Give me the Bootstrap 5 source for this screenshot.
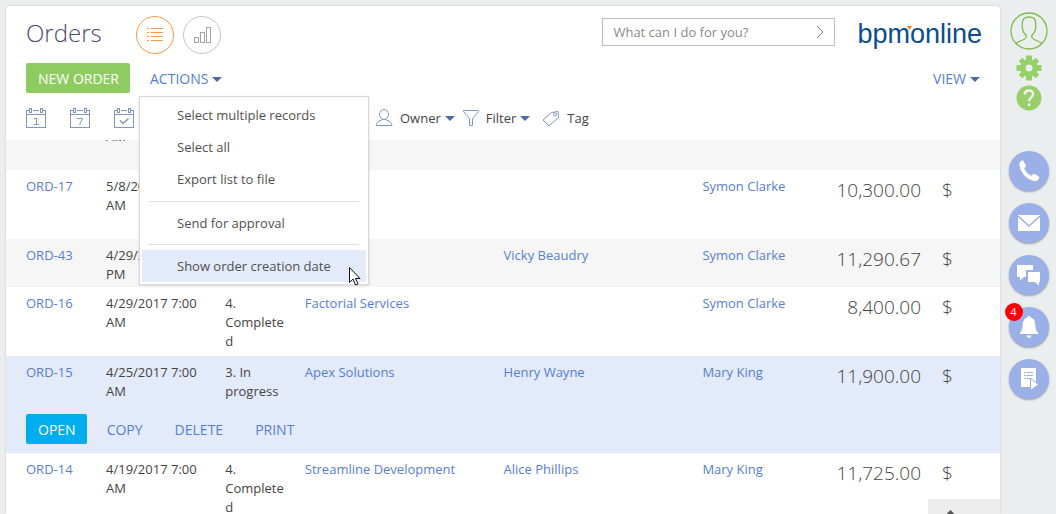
<!DOCTYPE html>
<html lang="en">
<head>
<meta charset="utf-8">
<meta name="viewport" content="width=device-width, initial-scale=1">
<title>Orders</title>
<link href="https://cdn.jsdelivr.net/npm/bootstrap@5.3.0/dist/css/bootstrap.min.css" rel="stylesheet">
<style>
:root { --link: #567ed6; --ink: #444; }
body { background: #eaeeee; color: var(--ink); font: 13px/19px "Open Sans", sans-serif; }
a { color: var(--link); text-decoration: none; }
svg { display: block; flex: none; }
.workspace { background: #fff; border-radius: 3px 3px 0 0; margin: 6px 0 0 6px; box-shadow: 0 0 2px rgba(0,0,0,.2); min-width: 0; }
.page-head { height: 57px; padding: 0 18px 0 20px; }
.page-title { font-size: 24px; line-height: 34px; font-weight: 300; color: #50476f; width: 110px; margin: 0 0 4px; }
.views { gap: 9px; }
.view-btn { width: 38px; height: 38px; border-radius: 50%; border: 1px solid #c6c6c6; background: none; color: #a3a3a3; padding: 0; display: grid; place-items: center; }
.view-btn.active { border-color: #f59a4b; color: #f59a4b; }
.command { width: 233px; height: 28px; border: 1px solid #bdbdbd; margin: 0 22px 5px 0; }
.command input { border: 0; outline: 0; width: 100%; padding: 0 10px; color: var(--ink); background: none; }
.command input::placeholder { color: #8a8a8a; opacity: 1; }
.command button { border: 0; background: none; padding: 0 9px; color: #777; }
.brand { font: 27px/31px "Liberation Sans", sans-serif; color: #0c4c8f; margin-bottom: 1px; }
.brand-mark { position: absolute; left: 50px; top: 7px; }
.bar { padding: 0 20px; height: 30px; font-size: 14px; }
.cmd { font-size: 14px; line-height: 20px; height: 30px; border: 0; border-radius: 2px; padding: 2px 11px 0 12px; color: #fff; }
.cmd-new { background: #8ecb60; }
.cmd-open { background: #00aeef; }
.cmd-link { background: none; color: var(--link); padding: 2px 0 0; }
.tri { border: 5px solid transparent; border-top-color: #4a6ba5; border-bottom: 0; }
.menu { --bs-dropdown-min-width: 228px; --bs-dropdown-border-radius: 0; --bs-dropdown-font-size: 13px; padding: 2px; border-color: #d8d8d8; left: -7px; top: 33px; box-shadow: 0 1px 3px rgba(0,0,0,.12); }
.menu .dropdown-item { height: 32px; line-height: 32px; padding: 0 35px; color: #505050; }
.menu .dropdown-item.current { background: #e3eafa; }
.menu .dropdown-divider { margin: 6px 7px 5px; border-color: #e0e0e0; opacity: 1; }
.menu .dropdown-divider.tight { margin-top: 5px; }
.pointer { position: absolute; right: 7px; bottom: -2px; }
.filters { height: 47px; padding: 3px 20px 0; color: #7f97bd; }
.filters button { border: 0; background: none; padding: 0; color: inherit; }
.filters .label { color: var(--ink); margin: 0 4px 0 7px; }
.periods { width: 349px; gap: 24px; }
.list { min-height: 0; }
.orders { width: 100%; table-layout: fixed; margin-top: -39px; overflow-wrap: break-word; }
.orders td { padding: 7px 18px 3px 0; vertical-align: top; }
.orders td:first-child { padding-left: 20px; }
.orders .tall { height: 69px; }
.orders .alt { background: #f6f6f6; }
.orders .selected { background: #e3eafa; }
.orders .money { font-size: 19px; line-height: 26px; font-weight: 300; text-align: right; padding-right: 0; }
.orders .unit { font-size: 19px; line-height: 26px; font-weight: 300; padding-left: 21px; }
.orders td.row-actions { padding: 10px 20px 9px; }
.row-actions .cmd-link { margin-left: 32px; }
.row-actions .first { margin-left: 20px; }
.to-top { position: absolute; right: 0; bottom: -15px; width: 72px; height: 30px; border: 0; border-radius: 2px 0 0 0; background: #ededed; color: #555; padding: 6px 0 0 17px; }
.rail { width: 56px; padding: 12px 0 0 1px; flex: none; }
.rail button { border: 0; background: none; padding: 0; }
.rail .profile { margin-bottom: 1px; }
.rail .tool { margin-top: 4px; }
.rail .round { width: 40px; height: 40px; border-radius: 50%; background: #9bb0e8; color: #fff; display: grid; place-items: center; margin-bottom: 12px; box-shadow: 0 1px 2px rgba(0,0,0,.35); position: relative; }
.rail .count { position: absolute; left: -4px; top: -4px; width: 18px; height: 18px; border-radius: 50%; background: #f00; font-size: 11px; line-height: 18px; }
</style>
</head>
<body>
<div class="d-flex vh-100 overflow-hidden">
  <main class="workspace flex-grow-1 d-flex flex-column position-relative">
    <header class="page-head d-flex align-items-center flex-shrink-0">
      <h1 class="page-title">Orders</h1>
      <div class="views d-flex">
        <button class="view-btn active" aria-label="List view"><svg width="18" height="16" fill="none" stroke="currentColor" shape-rendering="crispEdges"><path d="M1 1.500h2m2 0h12M1 5.500h2m2 0h12M1 9.500h2m2 0h12M1 13.500h2m2 0h12"/></svg></button>
        <button class="view-btn" aria-label="Chart view"><svg width="18" height="18" fill="none" stroke="currentColor" shape-rendering="crispEdges"><path d="M1.500 11.500h4v5h-4zM7.500 6.500h4v10h-4zM13.500 1.500h4v15h-4z"/></svg></button>
      </div>
      <div class="command d-flex ms-auto">
        <input type="text" aria-label="Command line" placeholder="What can I do for you?">
        <button aria-label="Run command"><svg width="9" height="14" fill="none" stroke="currentColor"><path d="M1 1l6 6-6 6"/></svg></button>
      </div>
      <a href="#" class="brand position-relative">bpmonline<svg class="brand-mark" width="5" height="4"><path fill="#f5820b" d="M0 0h5L2.500 4z"/></svg></a>
    </header>

    <div class="bar d-flex align-items-center flex-shrink-0">
      <button class="cmd cmd-new">NEW ORDER</button>
      <div class="dropdown ms-3 ps-1">
        <button class="cmd cmd-link d-flex align-items-center gap-1" aria-expanded="true">ACTIONS <span class="tri"></span></button>
        <div class="dropdown-menu menu show">
          <a class="dropdown-item" href="#">Select multiple records</a>
          <a class="dropdown-item" href="#">Select all</a>
          <a class="dropdown-item" href="#">Export list to file</a>
          <hr class="dropdown-divider">
          <a class="dropdown-item" href="#">Send for approval</a>
          <hr class="dropdown-divider tight">
          <a class="dropdown-item current" href="#">Show order creation date</a>
          <svg class="pointer" width="13" height="20"><path fill="#fff" stroke="#111" d="M1.500 1.500v15l3.500-3.500 2.500 6 2.500-1-2.500-5.500h4.500z"/></svg>
        </div>
      </div>
      <button class="cmd cmd-link d-flex align-items-center gap-1 ms-auto">VIEW <span class="tri"></span></button>
    </div>

    <div class="filters d-flex align-items-center flex-shrink-0">
      <div class="periods d-flex">
        <button aria-label="Today"><svg width="20" height="20" fill="none" stroke="currentColor" shape-rendering="crispEdges"><path d="M3 2.500H.5v17h19v-17H17M7 2.500h6M.5 6.500h19M3.500.5h2v4h-2zM14.500.5h2v4h-2zM8 10.500h2.500v6M8 16.500h5"/></svg></button>
        <button aria-label="This week"><svg width="20" height="20" fill="none" stroke="currentColor"><path shape-rendering="crispEdges" d="M3 2.500H.5v17h19v-17H17M7 2.500h6M.5 6.500h19M3.500.5h2v4h-2zM14.500.5h2v4h-2z"/><path d="M7 10.500h5.500l-3 6.500"/></svg></button>
        <button aria-label="Selected period"><svg width="20" height="20" fill="none" stroke="currentColor"><path shape-rendering="crispEdges" d="M3 2.500H.5v17h19v-17H17M7 2.500h6M.5 6.500h19M3.500.5h2v4h-2zM14.500.5h2v4h-2z"/><path stroke-width="1.500" d="M6 12.500l3 3 5.500-5"/></svg></button>
      </div>
      <button class="d-flex align-items-center"><svg width="18" height="18" fill="none" stroke="currentColor"><ellipse cx="9" cy="5.500" rx="4.500" ry="5"/><path d="M1 16.500h16c-.5-3-2-4-5.500-5.500-1.500-.7-3.500-.7-5 0C3 12.500 1.500 13.500 1 16.500z"/></svg><span class="label">Owner</span><span class="tri"></span></button>
      <button class="d-flex align-items-center ms-2"><svg width="16" height="18" fill="none" stroke="currentColor"><path d="M.5 1.500h15v1L9.500 9.500v7h-3v-7L.5 2.500z"/></svg><span class="label">Filter</span><span class="tri"></span></button>
      <button class="d-flex align-items-center ms-2 ps-1"><svg width="18" height="18" fill="none" stroke="currentColor"><path d="M9.500 3.500l6.500-1 .5 6-9.500 8.500L1 11z"/><circle cx="13" cy="5.500" r="1.500"/></svg><span class="label">Tag</span></button>
    </div>

    <section class="list flex-grow-1 overflow-hidden">
      <table class="orders" aria-label="Orders">
        <colgroup><col style="width:100px"><col style="width:12%"><col style="width:8%"><col style="width:20%"><col style="width:20%"><col style="width:12%"><col style="width:10%"><col></colgroup>
        <tbody>
          <tr class="tall alt"><td></td><td>5/8/2017 7:00 AM</td><td></td><td></td><td></td><td></td><td></td><td></td></tr>
          <tr class="tall"><td><a href="#">ORD-17</a></td><td>5/8/2017 7:00 AM</td><td></td><td></td><td></td><td><a href="#">Symon Clarke</a></td><td class="money">10,300.00</td><td class="unit">$</td></tr>
          <tr class="alt"><td><a href="#">ORD-43</a></td><td>4/29/2017 7:00 PM</td><td></td><td></td><td><a href="#">Vicky Beaudry</a></td><td><a href="#">Symon Clarke</a></td><td class="money">11,290.67</td><td class="unit">$</td></tr>
          <tr class="tall"><td><a href="#">ORD-16</a></td><td>4/29/2017 7:00 AM</td><td>4. Completed</td><td><a href="#">Factorial Services</a></td><td></td><td><a href="#">Symon Clarke</a></td><td class="money">8,400.00</td><td class="unit">$</td></tr>
          <tr class="selected"><td><a href="#">ORD-15</a></td><td>4/25/2017 7:00 AM</td><td>3. In progress</td><td><a href="#">Apex Solutions</a></td><td><a href="#">Henry Wayne</a></td><td><a href="#">Mary King</a></td><td class="money">11,900.00</td><td class="unit">$</td></tr>
          <tr class="selected"><td class="row-actions" colspan="8"><div class="d-flex"><button class="cmd cmd-open">OPEN</button><button class="cmd cmd-link first">COPY</button><button class="cmd cmd-link">DELETE</button><button class="cmd cmd-link">PRINT</button></div></td></tr>
          <tr class="tall"><td><a href="#">ORD-14</a></td><td>4/19/2017 7:00 AM</td><td>4. Completed</td><td><a href="#">Streamline Development</a></td><td><a href="#">Alice Phillips</a></td><td><a href="#">Mary King</a></td><td class="money">11,725.00</td><td class="unit">$</td></tr>
        </tbody>
      </table>
    </section>
    <button class="to-top" aria-label="Scroll to top"><svg width="11" height="14" fill="none" stroke="currentColor" stroke-width="2"><path d="M1 6l4.500-4.500L10 6M5.500 2v12"/></svg></button>
  </main>

  <aside class="rail d-flex flex-column align-items-center">
    <button class="profile" aria-label="Profile"><svg width="38" height="38" fill="none" stroke="#7dbb4e" stroke-width="1.300"><circle cx="19" cy="19" r="18"/><path d="M6 31.500c1-1 3-2 8-4 2-.8 2.500-2 2.300-4C13.500 21 12.500 18.500 12.300 16v-5c.2-4 3-6 6.700-6s6.500 2 6.700 6v5c-.2 2.500-1.200 5-4 7.500-.2 2 .3 3.200 2.300 4 5 2 7 3 8 4"/></svg></button>
    <button class="tool" aria-label="Settings"><svg width="26" height="26" viewBox="-13 -13 26 26"><g fill="#97cf68"><circle r="9"/><path d="M-3-12.500h6v25h-6zM-12.500-3v6h25v-6z"/><path transform="rotate(45)" d="M-2.500-12h5v24h-5zM-12-2.500v5h24v-5z"/></g><circle r="3.500" fill="#eaeeee"/></svg></button>
    <button class="tool" aria-label="Help"><svg width="26" height="26" fill="none" stroke="#eff5ea" stroke-width="2.500"><circle cx="13" cy="13" r="12.500" fill="#97cf68" stroke="none"/><path d="M8.700 9.500c.3-5.500 8.600-5 8.400-.3-.1 3.300-4.100 3.300-4.100 7.300M13 18.500v2.500"/></svg></button>
    <nav class="pt-4 mt-3" aria-label="Communication panel">
      <button class="round" aria-label="Calls"><svg width="24" height="24" viewBox="0 0 24 24"><path fill="currentColor" d="M2.500 4.500C3 2 5 1.300 6.300 1.700L9 6.500c.3 1.300-1.500 2-1.800 3 1 3 4 6 7 7.200 1.300-.2 1.600-1.700 3-1.900l4.500 2.500c1.300 1.500-.5 4.700-3 4.700C11 22 2 13 2.500 4.500z"/></svg></button>
      <button class="round" aria-label="Email"><svg width="22" height="16"><path fill="currentColor" d="M0 0h22v16H0z"/><path fill="none" stroke="#9bb0e8" stroke-width="1.500" d="M0 1l11 10L22 1"/></svg></button>
      <button class="round" aria-label="Feed"><svg width="24" height="22" fill="currentColor"><path d="M0 1h16v5H9v7H7l-4 3.500V13H0z"/><path d="M11 8h12v10h-1v3.500L18 18h-7z"/></svg></button>
      <button class="round" aria-label="Notifications"><svg width="20" height="24" fill="currentColor"><path d="M10 1c1 0 1.700.7 1.800 1.600C15 3.500 16 6 16.200 9c.2 4 .8 7 2.800 8.500V19H1v-1.500C3 16 3.600 13 3.800 9 4 6 5 3.500 8.200 2.600 8.300 1.700 9 1 10 1zM7.500 20.500h5c-.5 3.300-4.500 3.300-5 0z"/></svg><span class="count">4</span></button>
      <button class="round" aria-label="Processes"><svg width="20" height="24"><path fill="currentColor" d="M2 1h15v19H2z"/><path stroke="#9bb0e8" d="M5 5.500h2m1 0h6M5 8.500h2m1 0h6M5 11.500h2m1 0h4"/><path fill="currentColor" stroke="#9bb0e8" d="M11.500 11.500v12l8-6z"/></svg></button>
    </nav>
  </aside>
</div>
<script src="https://cdn.jsdelivr.net/npm/bootstrap@5.3.0/dist/js/bootstrap.bundle.min.js"></script>
</body>
</html>
